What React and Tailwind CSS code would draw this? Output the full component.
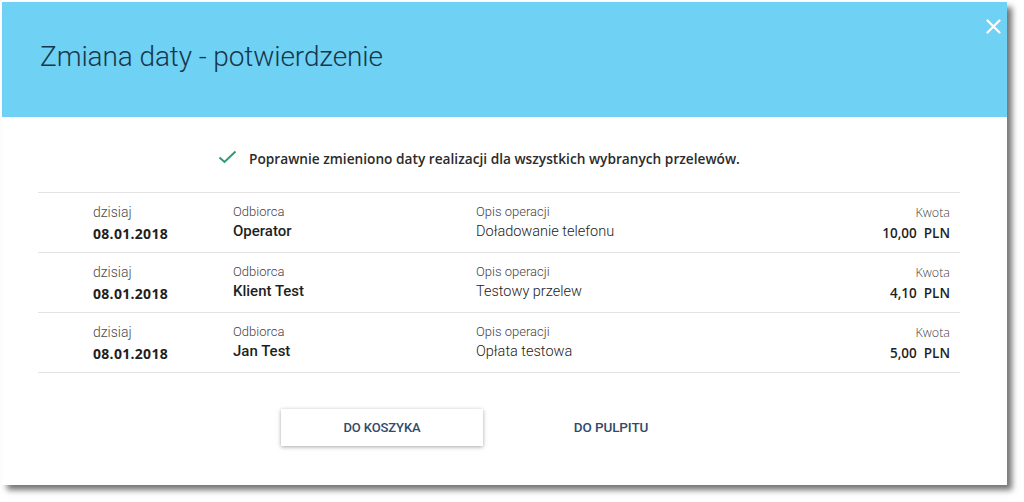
import React from "react";

const rows = [
  { name: "Operator", desc: "Doładowanie telefonu", amount: "10,00" },
  { name: "Klient Test", desc: "Testowy przelew", amount: "4,10" },
  { name: "Jan Test", desc: "Opłata testowa", amount: "5,00" },
];

export default function App() {
  return (
    <div className="w-[1024px] h-[502px] bg-white pt-[2px] pl-[2px] overflow-hidden" style={{ fontFamily: "Roboto, 'Noto Sans', sans-serif" }}>
      <div className="w-[1005px] h-[483px] bg-white flex flex-col shadow-[5px_5px_6px_rgba(0,0,0,0.55)]">
        <div className="relative h-[115px] bg-[#6fd2f5] pl-[38px] pt-[38px] shrink-0">
          <h1 className="text-[28px] leading-[34px] font-light text-[#17374a] tracking-[-0.1px]">Zmiana daty - potwierdzenie</h1>
          <svg className="absolute right-[6px] top-[17px]" width="15" height="15" viewBox="0 0 15 15">
            <path d="M1.5 1.5 L13.5 13.5 M13.5 1.5 L1.5 13.5" stroke="#ffffff" strokeWidth="2.2" strokeLinecap="round" />
          </svg>
        </div>
        <div className="flex items-center pl-[216px] pt-[30px] h-[55px]">
          <svg width="19" height="14" viewBox="0 0 19 14" className="mt-[-6px]">
            <path d="M1.5 7.5 L6.5 12 L17.5 1.5" fill="none" stroke="#2e9c6c" strokeWidth="2" />
          </svg>
          <span className="ml-[12px] text-[13.7px] font-semibold text-[#2b2b2b]" style={{ fontFamily: "'Open Sans', sans-serif" }}>Poprawnie zmieniono daty realizacji dla wszystkich wybranych przelewów.</span>
        </div>
        <div className="ml-[36px] w-[922px] mt-[20px] border-t border-[#e3e3e3]">
          {rows.map((r, i) => (
            <div key={i} className="h-[60px] border-b border-[#e3e3e3] flex pl-[55px] pr-[10px] pt-[10px]">
              <div className="w-[140px]">
                <div className="text-[14px] leading-[19px] font-light text-[#4a4a4a]">dzisiaj</div>
                <div className="text-[14px] leading-[24px] font-bold text-[#1f1f1f] tracking-[0.3px]" style={{ fontFamily: "'Open Sans', sans-serif" }}>08.01.2018</div>
              </div>
              <div className="w-[243px]">
                <div className="text-[13px] leading-[18px] font-light text-[#444]">Odbiorca</div>
                <div className="text-[15px] leading-[21px] font-medium text-[#1f1f1f]">{r.name}</div>
              </div>
              <div className="flex-1">
                <div className="text-[13px] leading-[18px] font-light text-[#444]">Opis operacji</div>
                <div className="text-[14.5px] leading-[21px] font-light text-[#222]">{r.desc}</div>
              </div>
              <div className="text-right" style={{ fontFamily: "'Open Sans', sans-serif" }}>
                <div className="text-[12.5px] leading-[19px] font-light text-[#444]">Kwota</div>
                <div className="text-[13.5px] leading-[22px] font-semibold text-[#1f1f1f]">{r.amount}<span className="ml-[7px]">PLN</span></div>
              </div>
            </div>
          ))}
        </div>
        <div className="flex pl-[279px] mt-[36px] gap-[27px]">
          <button className="w-[202px] h-[37px] bg-white shadow-[0_1px_4px_rgba(0,0,0,0.35)] text-[13px] font-medium text-[#2f4a6b] tracking-[-0.1px]">DO KOSZYKA</button>
          <button className="w-[202px] h-[37px] text-[13.5px] font-medium text-[#2f4a6b] tracking-[-0.1px]">DO PULPITU</button>
        </div>
      </div>
    </div>
  );
}
